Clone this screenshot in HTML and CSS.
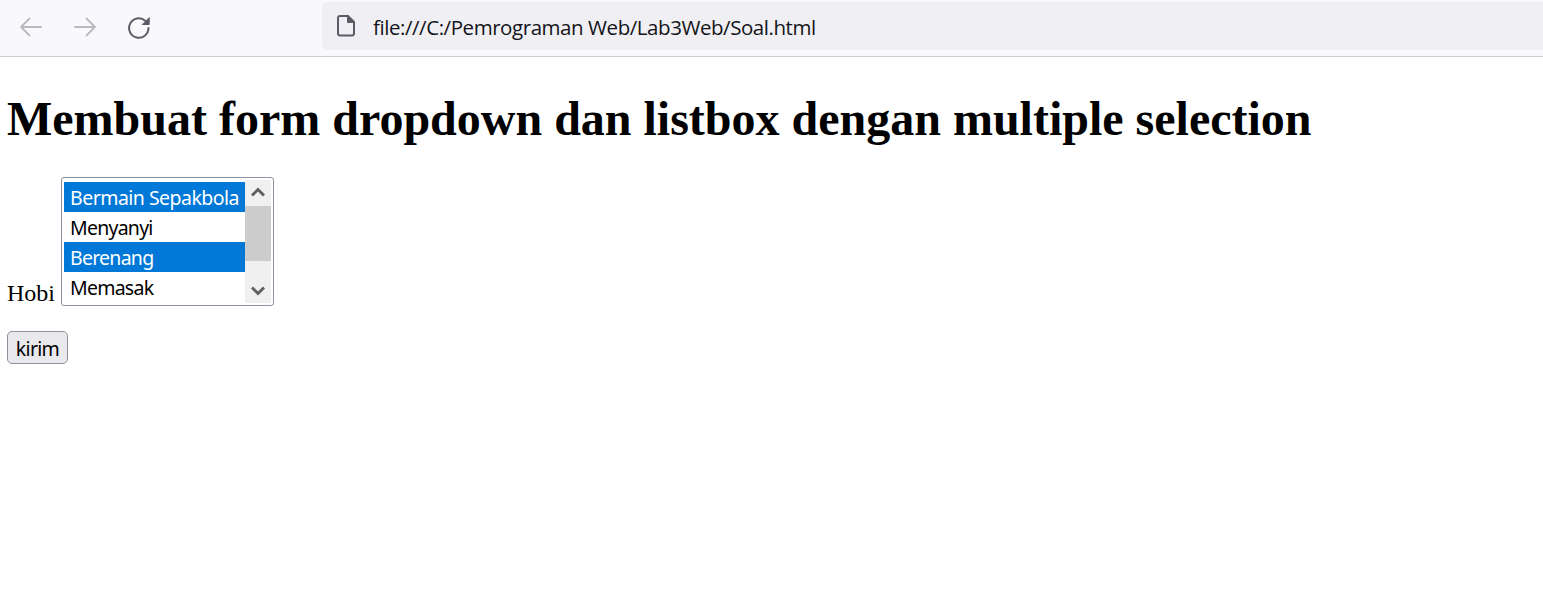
FILE: index.html
```html
<!DOCTYPE html>
<html lang="id">
<head>
<meta charset="utf-8">
<title>Soal</title>
<link rel="stylesheet" href="styles.css">
</head>
<body>
<header class="toolbar">
  <nav class="nav">
    <svg class="nav-icon muted" viewBox="0 0 24 24"><path d="M22 12H2M10.500 3.500L2 12l8.500 8.500"/></svg>
    <svg class="nav-icon muted" viewBox="0 0 24 24"><path d="M2 12h20M13.500 3.500L22 12l-8.500 8.500"/></svg>
    <svg class="nav-icon reload" viewBox="0 0 24 24"><path d="M21.500 13A9.700 9.700 0 1 1 18.200 5.800"/><path class="solid" d="M22.200 3v6.500h-6.500z"/></svg>
  </nav>
  <div class="address">
    <svg class="page-icon" viewBox="0 0 20 24"><path d="M4 2h8l6 6v11.500a2 2 0 0 1-2 2H4a2 2 0 0 1-2-2V4a2 2 0 0 1 2-2z"/><path class="solid" d="M11.500 2v6.500H18z"/></svg>
    <span class="url">file:///C:/Pemrograman Web/Lab3Web/Soal.html</span>
  </div>
</header>
<main class="page">
  <h1 class="title">Membuat form dropdown dan listbox dengan multiple selection</h1>
  <div class="field">
    <span class="label">Hobi</span>
    <div class="listbox">
      <ul class="options">
        <li class="option selected wide">Bermain Sepakbola</li>
        <li class="option">Menyanyi</li>
        <li class="option selected">Berenang</li>
        <li class="option">Memasak</li>
      </ul>
      <div class="scrollbar">
        <svg class="chevron" viewBox="0 0 14 10"><path d="M1 8.500L7 2.500 13 8.500"/></svg>
        <div class="thumb"></div>
        <svg class="chevron down" viewBox="0 0 14 10"><path d="M1 1.500L7 7.500 13 1.500"/></svg>
      </div>
    </div>
  </div>
  <button class="submit" type="button">kirim</button>
</main>
</body>
</html>
```
FILE: styles.css
```css
* { box-sizing: border-box; }
body { margin: 0; background: #fff; color: #000; overflow: hidden; }
.toolbar {
  display: flex;
  height: 57px;
  padding: 2px 0 6px 19px;
  background: #f9f9fb;
  border-bottom: 1px solid #ccccce;
}
.nav { display: flex; gap: 30px; width: 303px; padding-top: 13px; }
.nav-icon { width: 24px; height: 24px; fill: none; stroke: #5b5b66; stroke-width: 2; stroke-linecap: round; stroke-linejoin: round; }
.muted { stroke: #b9b9bf; stroke-width: 1.800; }
.solid { fill: #5b5b66; stroke-width: 1; }
.address {
  display: flex;
  flex: 1;
  align-items: center;
  height: 48px;
  padding-left: 14px;
  background: #f0f0f4;
  border-radius: 5px 0 0 5px;
}
.page-icon { width: 20px; height: 24px; fill: none; stroke: #5b5b66; stroke-width: 2; }
.page-icon .solid { fill: #5b5b66; }
.url { margin: 2px 0 0 17px; font: 20.500px/30px "Open Sans", sans-serif; color: #15141a; white-space: nowrap; letter-spacing: -0.440px; }
.page { padding: 34px 7px 0; }
.title { margin: 0; font: bold 48px/56px "Liberation Serif", serif; white-space: nowrap; }
.field { display: flex; align-items: flex-end; margin-top: 30px; }
.label { width: 54px; font: 24px/26px "Liberation Serif", serif; }
.listbox {
  display: flex;
  width: 213px;
  height: 129px;
  padding: 2px;
  border: 1px solid #8f8f9d;
  border-radius: 3px;
}
.options { width: 181px; margin: 0; padding: 2px 0 0; list-style: none; }
.option { height: 30px; padding-left: 6px; font: 19.500px/31px "Noto Sans", sans-serif; white-space: nowrap; letter-spacing: -0.750px; }
.selected { background: #0078d7; color: #fff; }
.wide { letter-spacing: -0.520px; }
.scrollbar { display: flex; flex-direction: column; align-items: center; width: 26px; height: 123px; background: #f0f0f0; }
.chevron { width: 14px; height: 10px; margin: 7px 0 9px; fill: none; stroke: #606060; stroke-width: 3; }
.down { margin: auto 0 7px; }
.thumb { width: 26px; height: 55px; background: #cdcdcd; }
.submit {
  display: block;
  width: 61px;
  height: 33px;
  margin-top: 25px;
  padding: 2px 0 0;
  border: 1px solid #8f8f9d;
  border-radius: 5px;
  background: #e9e9ed;
  color: #000;
  font: 19.500px/29px "Noto Sans", sans-serif;
  letter-spacing: -0.700px;
}
```
